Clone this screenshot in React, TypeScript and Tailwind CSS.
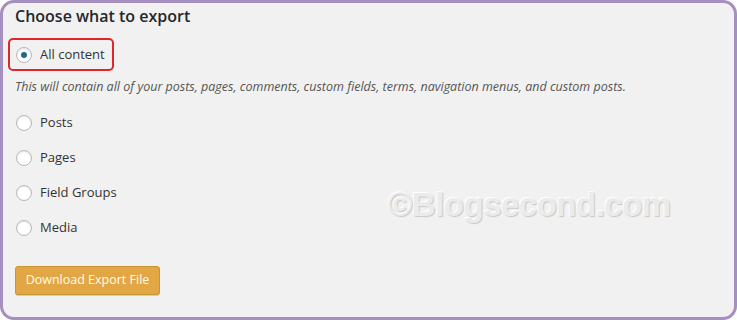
import React from "react";

function Radio({ checked }: { checked?: boolean }) {
  return (
    <span className="flex h-[16px] w-[16px] shrink-0 items-center justify-center rounded-full border border-[#b4b9be] bg-white shadow-[inset_0_1px_2px_rgba(0,0,0,0.1)]">
      {checked && <span className="h-[6px] w-[6px] rounded-full bg-[#1e6a8d]" />}
    </span>
  );
}

function Option({ label }: { label: string }) {
  return (
    <div className="flex h-[35px] items-center gap-[8px] pl-[13px]">
      <Radio />
      <span className="text-[13px] text-[#333]">{label}</span>
    </div>
  );
}

export default function App() {
  return (
    <div
      className="relative h-[320px] w-[737px] overflow-hidden rounded-[14px] border-[3px] border-[#a58fbf] bg-[#f1f1f1] text-[#222]"
      style={{ fontFamily: '"Open Sans", "Noto Sans", sans-serif' }}
    >
      <div className="flex flex-col pl-[12px]">
        <h2 className="text-[16px] font-semibold leading-[26px] text-[#23282d]">Choose what to export</h2>
        <div className="mt-[9px] flex h-[33px] w-[106px] -translate-x-[7px] items-center gap-[8px] rounded-[5px] border-2 border-[#e0262b] pl-[6px]">
          <Radio checked />
          <span className="text-[13px] text-[#333]">All content</span>
        </div>
        <p className="mt-[7px] text-[12.5px] italic leading-[18px] text-[#555]">
          This will contain all of your posts, pages, comments, custom fields, terms, navigation menus, and custom posts.
        </p>
        <div className="mt-[9px] -ml-[12px] flex flex-col">
          <Option label="Posts" />
          <Option label="Pages" />
          <Option label="Field Groups" />
          <Option label="Media" />
        </div>
        <div className="mt-[21px]">
          <button className="h-[29px] w-[145px] rounded-[3px] border border-[#c8962f] bg-[#e2a744] text-[12.5px] text-[#fffbea] shadow-[0_1px_0_rgba(0,0,0,0.15)]">
            Download Export File
          </button>
        </div>
      </div>
      <div
        className="pointer-events-none absolute left-[385px] top-[177px] text-[33px] font-bold tracking-[-0.5px] text-[#ebebeb]"
        style={{
          fontFamily: '"Liberation Sans", Arial, sans-serif',
          textShadow: "1px 1px 1px #c8c8c8, -1px -1px 0 #ffffff",
        }}
      >
        ©Blogsecond.com
      </div>
    </div>
  );
}
